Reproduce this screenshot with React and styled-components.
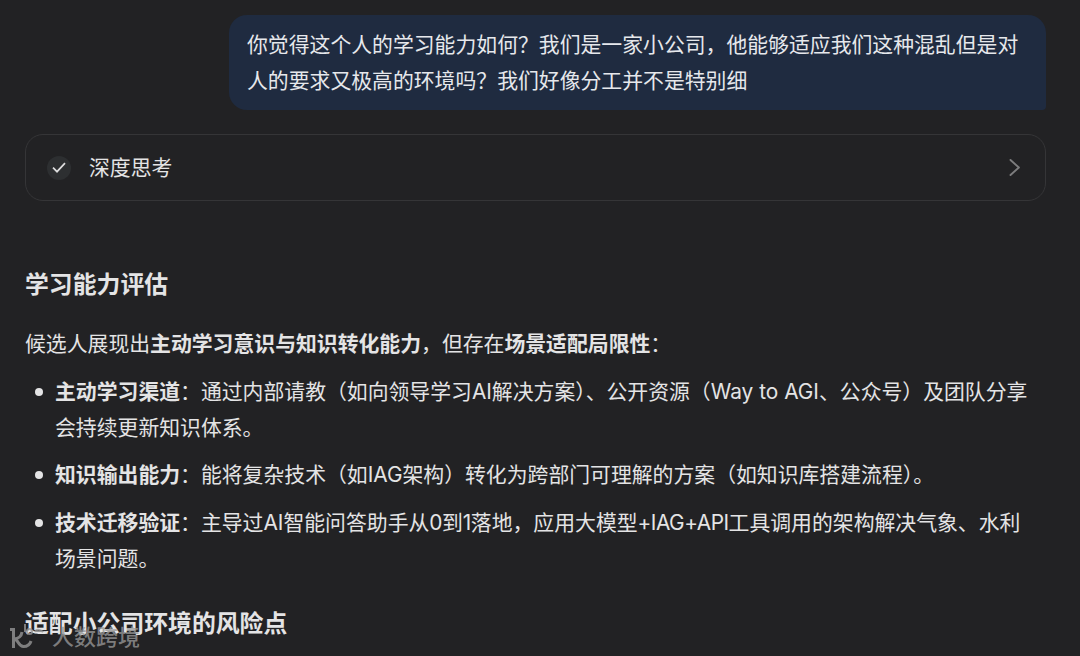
import React from "react";
import styled, { createGlobalStyle } from "styled-components";

export default function App() {
  return (
    <>
      <GlobalStyle />
      <ChatRoot>
        <UserBubble>
          你觉得这个人的学习能力如何？我们是一家小公司，他能够适应我们这种混乱但是对
          <br />
          人的要求又极高的环境吗？我们好像分工并不是特别细
        </UserBubble>
        <ThinkingCard>
          <CheckBadge>
            <svg width="14" height="12" viewBox="0 0 14 12" fill="none">
              <path d="M1 5.7L5 9.7L13 1.2" stroke="#dededf" strokeWidth="1.7" />
            </svg>
          </CheckBadge>
          <ThinkingLabel>深度思考</ThinkingLabel>
          <svg width="12" height="18" viewBox="0 0 12 18" fill="none">
            <path
              d="M1.5 1L9.9 8.5L1.5 16"
              stroke="#7d7d7e"
              strokeWidth="1.9"
              strokeLinecap="round"
              strokeLinejoin="round"
            />
          </svg>
        </ThinkingCard>
        <Heading margin={"66px 0px 0px 0px"}>学习能力评估</Heading>
        <Paragraph>
          候选人展现出<b>主动学习意识与知识转化能力</b>，但存在<b>场景适配局限性</b>：
        </Paragraph>
        <List>
          <Item>
            <b>主动学习渠道</b>：通过内部请教（如向领导学习AI解决方案）、公开资源（Way to AGI、公众号）及团队分享
            <br />
            会持续更新知识体系。
          </Item>
          <Item>
            <b>知识输出能力</b>：能将复杂技术（如IAG架构）转化为跨部门可理解的方案（如知识库搭建流程）。
          </Item>
          <Item>
            <b>技术迁移验证</b>：主导过AI智能问答助手从<Latin>0</Latin>到<Latin>1</Latin>落地，应用大模型<Latin>+IAG+API</Latin>工具调用的架构解决气象、水利
            <br />
            场景问题。
          </Item>
        </List>
        <Heading margin={"29px 0px 0px 0px"}>适配小公司环境的风险点</Heading>
        <Watermark>
          <svg width="36" height="26" viewBox="0 0 36 26" fill="none" stroke="currentColor" strokeWidth="3">
            <path d="M1 5.5H4.5V24M13 8C12.5 12 9.5 15 5 15C9.5 15 9 22.5 14.500 22.5C18.5 22.5 21 20.5 22 17" />
            <circle cx="20.5" cy="7.500" r="2.600" strokeWidth="2" />
            <path d="M16 0V8M26 8C27 5 31 5 34 8" strokeWidth="2" />
          </svg>
          <span>人数跨境</span>
        </Watermark>
      </ChatRoot>
    </>
  );
}

const GlobalStyle = createGlobalStyle`
  body {
    margin: 0;
    background-color: #222224;
    overflow: hidden;
  }
`;
const ChatRoot = styled.div`
  position: relative;
  box-sizing: border-box;
  width: 1080px;
  height: 656px;
  overflow: hidden;
  display: flex;
  flex-direction: column;
  padding: 15px 34px 0px 25px;
  background-color: #222224;
  color: #e4e4e5;
  font-family: Inter, "Noto Sans CJK SC", sans-serif;
  font-size: 20.85px;
  line-height: 35.8px;
  white-space: nowrap;

  b {
    font-weight: 700;
  }
`;
const UserBubble = styled.div`
  box-sizing: border-box;
  align-self: flex-end;
  width: 817px;
  height: 95px;
  padding: 12px 18px;
  border-radius: 18px 18px 4px 18px;
  background-color: #1f2b40;
  color: #e6e8ec;
  line-height: 36px;
`;
const ThinkingCard = styled.div`
  box-sizing: border-box;
  display: flex;
  align-items: center;
  height: 67px;
  margin: 24px 0px 0px 0px;
  padding: 0px 24px 0px 21px;
  border: 1px solid #353537;
  border-radius: 18px;
`;
const CheckBadge = styled.div`
  display: flex;
  align-items: center;
  justify-content: center;
  width: 24px;
  height: 24px;
  border-radius: 50%;
  background-color: #2d2f31;
`;
const ThinkingLabel = styled.div`
  flex: 1;
  margin: 0px 0px 0px 18px;
`;
const Heading = styled.h3`
  font-size: 23.85px;
  font-weight: 700;
  line-height: 36px;
  margin: ${(props) => props.margin};
`;
const Paragraph = styled.p`
  margin: 23px 0px 0px 0px;
`;
const List = styled.ul`
  display: flex;
  flex-direction: column;
  gap: 11.9px;
  list-style: none;
  margin: 12.1px 0px 0px 0px;
  padding: 0px;
`;
const Item = styled.li`
  position: relative;
  padding: 0px 0px 0px 30px;

  &::before {
    content: "";
    position: absolute;
    left: 10px;
    top: 14px;
    width: 8px;
    height: 8px;
    border-radius: 50%;
    background-color: #e4e4e5;
  }
`;
const Latin = styled.span`
  letter-spacing: -0.5px;
`;
const Watermark = styled.div`
  position: absolute;
  left: 9px;
  bottom: 6px;
  display: flex;
  align-items: center;
  gap: 7px;
  color: rgba(150, 150, 150, 0.8);
  font-size: 22px;
  font-weight: 500;
  line-height: 26px;
`;
